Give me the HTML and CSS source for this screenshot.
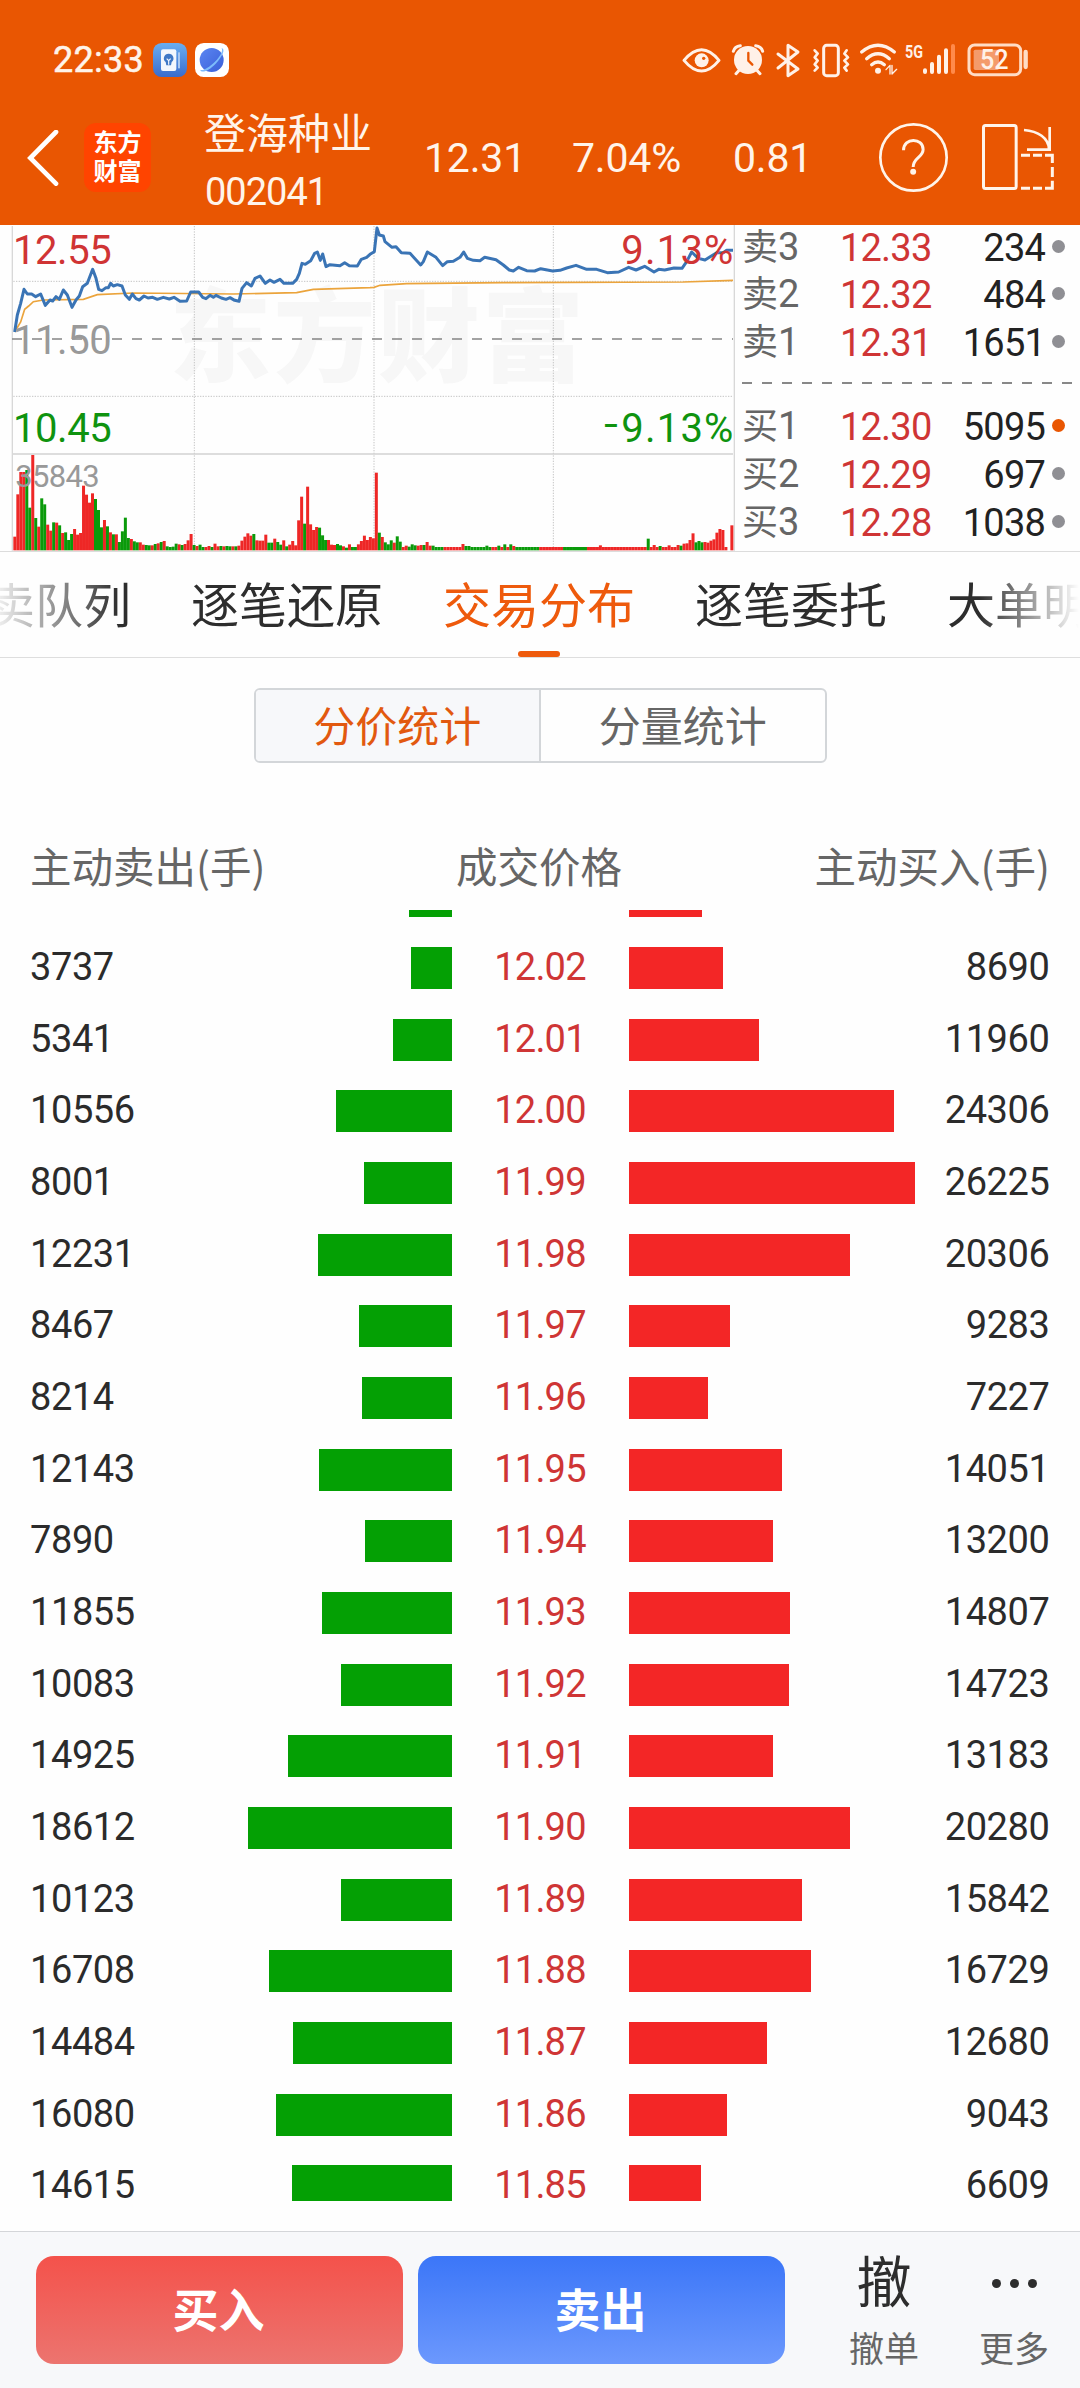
FILE: index.html
```html
<!DOCTYPE html>
<html lang="zh-CN">
<head>
<meta charset="utf-8">
<title>登海种业 002041</title>
<link rel="stylesheet" href="styles.css">
</head>
<body>
<header class="header">
  <div class="status">
    <span class="clock">22:33</span>
    <svg class="app-icon" viewBox="0 0 102 102">
      <defs><linearGradient id="ga" x1="0" y1="0" x2="0" y2="1"><stop offset="0" stop-color="#6aaef0"/><stop offset="1" stop-color="#3a6ccd"/></linearGradient>
      <linearGradient id="gb" x1="0" y1="0" x2="1" y2="1"><stop offset="0" stop-color="#5b86f2"/><stop offset="1" stop-color="#3a5fd8"/></linearGradient></defs>
      <rect width="102" height="102" rx="26" fill="url(#ga)"/>
      <rect x="24" y="19" width="46" height="65" rx="6" fill="#f3f7fd"/>
      <rect x="75" y="28" width="6" height="48" fill="#a9c8f0"/>
      <path d="M47 32a14 14 0 0 1 9 25l-2 10H40l-2-10a14 14 0 0 1 9-25z" fill="#3f78c6"/>
      <path d="M41 47l6 6 6-6M47 53v12" stroke="#f3f7fd" stroke-width="3.500" fill="none"/>
    </svg>
    <svg class="app-icon" viewBox="0 0 102 102">
      <rect width="102" height="102" rx="26" fill="#fff"/>
      <circle cx="50" cy="51" r="36" fill="url(#gb)"/>
      <path d="M80 15C92 18 83 40 62 62S20 92 15 80c8 5 26-6 44-23S84 24 80 15z" fill="#7dbcfb"/>
    </svg>
    <svg class="status-icons" viewBox="0 0 1080 150" fill="none" stroke="#fff1e8" stroke-width="9" stroke-linecap="round" stroke-linejoin="round">
      <path d="M12 73Q65 9 117 73Q65 137 12 73z"/>
      <circle cx="65" cy="73" r="21" fill="#fff1e8" stroke="none"/><circle cx="71" cy="67" r="5" fill="#e95602" stroke="none"/>
      <circle cx="204" cy="72" r="42" fill="#fff1e8" stroke="none"/>
      <path d="M160 46Q164 31 181 29M248 46Q244 31 227 29M176 104l-8 9M232 104l8 9"/>
      <path d="M205 51v23l12 12" stroke="#e95602" stroke-width="7"/>
      <path d="M294 54l60 45-30 20V28l30 20-60 48"/>
      <rect x="431" y="28" width="44" height="91" rx="9"/>
      <path d="M404 43l9 10-9 11 9 10-9 11 9 10-9 9M500 43l-7 10 11 11-11 10 11 11-11 10 7 9" stroke-width="8"/>
      <path d="M545 48Q594 7 643 48M560 68Q594 39 628 68M575 86Q594 70 613 86" stroke-width="10"/>
      <circle cx="594" cy="104" r="9" fill="#fff1e8" stroke="none"/>
      <path d="M618 101l12-13v26M636 88v26l14-14" stroke-width="4"/>
      <path d="M735 103v5M756 84v24M777 62v46M798 43v65" stroke-width="12"/>
      <path d="M819 30v78" stroke="#ff8a4a" stroke-width="12"/>
      <rect x="881" y="41" width="76" height="61" rx="5" fill="#f49b6b" stroke="none"/>
      <rect x="867" y="27" width="155" height="89" rx="17" stroke="#ffdcc5"/>
      <path d="M1037 48v45" stroke="#ffdcc5" stroke-width="13"/>
      <text class="net" x="675" y="65" textLength="54" lengthAdjust="spacingAndGlyphs">5G</text>
      <text class="batt" x="900" y="98" textLength="86" lengthAdjust="spacingAndGlyphs">52</text>
    </svg>
  </div>
  <nav class="nav">
    <svg class="back" viewBox="0 0 102 168"><path d="M90 6L13 84l77 77" fill="none" stroke="#fff" stroke-width="14" stroke-linecap="round"/></svg>
    <div class="logo"><span>东方</span><span>财富</span></div>
    <div class="stock"><span class="stock-name">登海种业</span><span class="stock-code">002041</span></div>
    <span class="quote">12.31</span>
    <span class="quote">7.04%</span>
    <span class="quote">0.81</span>
    <svg class="help" viewBox="0 0 208 208" fill="none" stroke="#fff4ea" stroke-width="8"><circle cx="104" cy="104" r="100"/><path d="M74 82C74 43 133 43 133 80C133 104 103 104 103 133" stroke-width="9"/><circle cx="103" cy="147" r="9" fill="#fff4ea" stroke="none"/></svg>
    <svg class="rotate" viewBox="0 0 216 198" fill="none" stroke="#fff4ea" stroke-width="9"><rect x="4.500" y="4.500" width="98" height="189" rx="6"/><path d="M126 18C168 21 200 42 201 76M135 77h68V9" stroke-width="8"/><path d="M117 94h27M153 94h27M189 94h22v23M211 129v30M211 170v23h-22M180 193h-27M144 193h-27"/></svg>
  </nav>
</header>

<section class="market">
  <svg class="chart" viewBox="0 15 2205 978">
    <g class="watermark"><text x="508" y="463" textLength="1244">东方财富</text></g>
    <path class="grid" d="M40 184H2199M40 529H2199M583 18V990M1122 18V990M1660 18V990"/>
    <path class="axis" d="M36 702H2199"/>
    <path class="frame" d="M37 18V992M2203 15V992"/>
    <path class="mid" d="M36 357H2199"/>
    <g id="volume"></g>
    <path class="avg" d="M44 336L62 306 74 268 86 258 100 245 130 240 250 238 292 224 400 219 700 222 890 218 940 208 1110 203 1122 202 1140 196 1220 191 1510 188 2050 186 2199 181"/>
    <path class="price" d="M44 336L52 285 62 250 72 208 82 222 95 222 107 230 122 222 136 256 150 240 158 243 168 230 178 238 190 210 202 225 216 262 228 240 238 228 248 200 262 190 278 148 288 175 296 208 306 212 318 203 325 203 332 190 340 198 352 194 366 198 376 225 388 238 397 222 408 236 418 240 432 228 444 234 458 232 472 238 490 232 508 237 522 232 540 244 560 243 572 216 596 216 608 232 618 236 630 226 640 232 648 226 664 234 678 238 690 233 704 241 717 244 726 205 740 188 754 198 765 175 780 168 796 190 810 180 822 187 840 178 852 190 878 190 890 178 898 160 906 130 916 133 932 122 944 100 952 96 961 121 968 102 978 140 990 134 1020 137 1034 128 1048 137 1072 138 1084 118 1100 112 1110 103 1123 95 1131 24 1138 45 1150 48 1155 65 1176 82 1188 80 1204 98 1230 100 1262 135 1270 125 1282 96 1308 112 1328 137 1342 125 1360 124 1380 112 1391 96 1402 115 1420 121 1440 122 1454 112 1488 119 1510 135 1528 150 1540 153 1556 142 1580 152 1604 153 1622 146 1658 153 1680 151 1700 144 1728 136 1760 148 1790 148 1822 158 1856 156 1886 142 1908 150 1934 139 1962 156 1976 148 1994 150 2022 144 2046 145 2060 125 2075 96 2095 115 2115 120 2150 98 2170 98 2180 91 2199 91"/>
    <g class="labels">
      <text class="up" x="39" y="133" textLength="296">12.55</text>
      <text class="flat" x="39" y="401" textLength="296">11.50</text>
      <text class="down" x="39" y="667" textLength="296">10.45</text>
      <text class="up" x="1864" y="133" textLength="336">9.13%</text>
      <text class="down" x="1808" y="660" textLength="50" lengthAdjust="spacingAndGlyphs">−</text>
      <text class="down" x="1864" y="667" textLength="336">9.13%</text>
      <text class="vol" x="46" y="800" textLength="253">35843</text>
    </g>
  </svg>
  <div class="book">
    <div class="level"><span>卖<b>3</b></span><span class="p">12.33</span><span class="q">234</span><i></i></div>
    <div class="level"><span>卖<b>2</b></span><span class="p">12.32</span><span class="q">484</span><i></i></div>
    <div class="level"><span>卖<b>1</b></span><span class="p">12.31</span><span class="q">1651</span><i></i></div>
    <div class="spread"></div>
    <div class="level"><span>买<b>1</b></span><span class="p">12.30</span><span class="q">5095</span><i class="hot"></i></div>
    <div class="level"><span>买<b>2</b></span><span class="p">12.29</span><span class="q">697</span><i></i></div>
    <div class="level"><span>买<b>3</b></span><span class="p">12.28</span><span class="q">1038</span><i></i></div>
  </div>
</section>

<nav class="tabs">
  <div class="tab-strip">
    <span>买卖队列</span><span>逐笔还原</span><span class="active">交易分布</span><span>逐笔委托</span><span>大单明细</span>
  </div>
</nav>

<div class="segment"><span class="on">分价统计</span><span>分量统计</span></div>

<div class="table-head"><span>主动卖出(手)</span><span>成交价格</span><span>主动买入(手)</span></div>
<main class="list" id="list"></main>

<footer class="actions">
  <button class="btn buy">买入</button>
  <button class="btn sell">卖出</button>
  <div class="tool cancel"><span class="glyph">撤</span><span class="cap">撤单</span></div>
  <div class="tool more"><span class="dots"><i></i><i></i><i></i></span><span class="cap">更多</span></div>
</footer>
<script src="app.js"></script>
</body>
</html>
```
FILE: styles.css
```css
* { box-sizing: border-box; }
body {
  margin: 0;
  width: 1080px;
  height: 2388px;
  overflow: hidden;
  display: flex;
  flex-direction: column;
  background: #fefefe;
  color: #2b2b2b;
  font-family: Roboto, "Noto Sans CJK SC", sans-serif;
  font-size: 38px;
}
svg { display: block; }
b, i { font-weight: inherit; font-style: normal; }

.header { height: 225px; flex: none; background: #e95602; color: #fff4ea; }
.status { height: 90px; padding-top: 36px; display: flex; align-items: flex-start; }
.clock { margin-left: 53px; width: 100px; font-size: 36px; line-height: 48px; letter-spacing: 0.3px; font-weight: 400; -webkit-text-stroke: 0.5px #fff4ea; }
.app-icon { width: 34px; height: 34px; margin: 7px 8px 0 0; }
.status-icons { width: 360px; height: 50px; margin-left: 443px; }
.net { font: 700 55px Roboto, sans-serif; fill: #fff1e8; stroke: none; }
.batt { font: 500 84px Roboto, sans-serif; fill: #fff1e8; stroke: none; }
.nav {
  height: 135px;
  display: grid;
  grid-template-columns: 84px 121px 219px 148px 161px 147px 102px 98px;
  align-items: center;
}
.back { width: 34px; height: 56px; margin-left: 26px; }
.logo {
  width: 67px; height: 69px; border-radius: 12px; background: #ff4400; color: #fff;
  display: flex; flex-direction: column; align-items: center; justify-content: center;
  font-size: 24px; font-weight: 700; line-height: 29px;
}
.stock { display: flex; flex-direction: column; padding-top: 9px; }
.stock-name { font-size: 42px; line-height: 60px; margin-left: -1px; }
.stock-code { font-size: 38px; line-height: 54px; letter-spacing: -1px; }
.quote { font-size: 41px; letter-spacing: -0.2px; }
.help { width: 69px; height: 69px; margin-left: -1px; }
.rotate { width: 72px; height: 66px; margin-top: -2px; }

.market { height: 327px; flex: none; display: flex; border-bottom: 1px solid #dcdcdc; }
.chart { width: 735px; height: 326px; flex: none; }
.watermark text { font: 900 306px "Noto Sans CJK SC", sans-serif; fill: #f7f7f7; }
.grid { stroke: #c4c4c4; stroke-width: 3; stroke-dasharray: 4 4; fill: none; }
.axis { stroke: #d2d2d2; stroke-width: 5; }
.frame { stroke: #d8d8d8; stroke-width: 4; fill: none; }
.mid { stroke: #858585; stroke-width: 5; stroke-dasharray: 30 30; }
.avg { stroke: #eba43c; stroke-width: 5; fill: none; }
.price { stroke: #3a74b5; stroke-width: 9; fill: none; stroke-linejoin: round; }
.bar-up { fill: #ee2726; }
.bar-down { fill: #0a9a0a; }
.labels text { font: 400 120px Roboto, sans-serif; }
.labels .up { fill: #d03434; }
.labels .down { fill: #0f930f; }
.labels .flat { fill: #999; }
.labels .vol { fill: #999; font-size: 93px; }

.book { flex: 1; padding: 0 14px 0 7px; color: #666; }
.level { height: 48px; display: grid; grid-template-columns: 98px 111px 93px 22px; align-items: center; line-height: 48px; font-size: 36px; }
.level:first-child { height: 45px; line-height: 42px; }
.level b { font-size: 38px; }
.level .p, .level .q { font-size: 38px; letter-spacing: -0.8px; }
.level .p { color: #cf3535; }
.level .q { color: #222; text-align: right; width: 104px; margin-left: -10px; }
.level i { width: 13px; height: 13px; border-radius: 50%; background: #8f8f94; margin: -2px 0 0 8px; }
.level .hot { background: #e95602; }
.spread { height: 36px; padding-top: 16px; }
.spread::before { content: ""; display: block; height: 2px; background: repeating-linear-gradient(90deg, #888 0 10px, transparent 10px 20px); width: 330px; margin-left: 0; }

.tabs { height: 106px; flex: none; border-bottom: 1px solid #dedede; overflow: hidden; }
.tab-strip {
  display: flex; gap: 60px; margin-left: -61px; width: 1300px; line-height: 109px; font-size: 48px; color: #2d2d2d;
  -webkit-mask-image: linear-gradient(90deg, transparent 50px, #000 180px, #000 1040px, transparent 1140px);
  mask-image: linear-gradient(90deg, transparent 50px, #000 180px, #000 1040px, transparent 1140px);
}
.tab-strip span { width: 192px; height: 105px; flex: none; white-space: nowrap; }
.tab-strip .active { color: #ee5a0c; display: flex; flex-direction: column; align-items: center; }
.tab-strip .active::after { content: ""; width: 42px; height: 6px; border-radius: 3px; background: #ee5a0c; margin-top: -10px; }

.segment {
  width: 573px; height: 75px; flex: none; margin: 30px auto 0; display: flex;
  border: 2px solid #d3d6d9; border-radius: 6px; overflow: hidden; font-size: 42px; line-height: 75px; color: #666; text-align: center;
}
.segment span { flex: 1; }
.segment .on { background: #f7f8fa; color: #e2590f; border-right: 2px solid #d3d6d9; }

.table-head {
  margin-top: 71px; height: 76px; flex: none; padding: 0 30px; display: grid; grid-template-columns: 1fr 1fr 1fr;
  font-size: 41.500px; line-height: 62px; color: #666; font-family: "Noto Sans CJK SC", sans-serif;
}
.table-head span:nth-child(2) { text-align: center; margin-left: -2px; }
.table-head span:nth-child(3) { text-align: right; }

.list { height: 1291px; flex: none; overflow: hidden; display: flex; flex-direction: column; justify-content: flex-end; padding: 0 30px; }
.row { height: 71.670px; flex: none; display: grid; grid-template-columns: 150px 271.500px 177px 295px 126px; align-items: center; letter-spacing: -0.4px; }
.row .price-cell { text-align: center; color: #cf3535; letter-spacing: -0.8px; }
.row .buy-vol { text-align: right; }
.row .cell { line-height: 44px; margin-top: -2px; }
.bar { height: 42px; }
.bar.out { background: #04a004; justify-self: end; }
.bar.in { background: #f32626; }
.row:last-child { margin-bottom: -21px; }

.actions {
  margin-top: 30px; flex: 1; background: #f7f8fa; border-top: 1px solid #d4d6d9;
  padding: 24px 0 0 36px; display: flex; align-items: flex-start;
}
.btn { width: 367px; height: 108px; border: 0; border-radius: 18px; margin-right: 15px; color: #fff; font: 700 46px "Noto Sans CJK SC", sans-serif; padding: 0 2px 6px 0; }
.buy { background: linear-gradient(#f4524b, #ec746f); }
.sell { background: linear-gradient(#3b76f8, #6c98fd); }
.tool { width: 130px; display: flex; flex-direction: column; align-items: center; color: #2d2d2d; }
.cancel { margin-left: 19px; }
.glyph { font-size: 55px; line-height: 54px; height: 67px; }
.cap { font-size: 35px; line-height: 56px; color: #666; }
.dots { height: 67px; display: flex; gap: 9px; padding-top: 23px; }
.dots i { width: 9px; height: 9px; border-radius: 50%; background: #2d2d2d; }
```
FILE: app.js
```js
// [sold, price, bought]; the first row is scrolled mostly out of view
const rows = [
  [3908, '', 6681], [3737, '12.02', 8690], [5341, '12.01', 11960], [10556, '12.00', 24306],
  [8001, '11.99', 26225], [12231, '11.98', 20306], [8467, '11.97', 9283], [8214, '11.96', 7227],
  [12143, '11.95', 14051], [7890, '11.94', 13200], [11855, '11.93', 14807], [10083, '11.92', 14723],
  [14925, '11.91', 13183], [18612, '11.90', 20280], [10123, '11.89', 15842], [16708, '11.88', 16729],
  [14484, '11.87', 12680], [16080, '11.86', 9043], [14615, '11.85', 6609]
];
const unit = 286.5 / 26225;
document.getElementById('list').innerHTML = rows.map(([s, p, b]) => `<div class="row">
  <span class="cell">${p ? s : ''}</span><div class="bar out" style="width:${(s * unit).toFixed(1)}px"></div>
  <span class="cell price-cell">${p}</span><div class="bar in" style="width:${(b * unit).toFixed(1)}px"></div>
  <span class="cell buy-vol">${p ? b : ''}</span></div>`).join('');

// per-minute volume: bar top, with r for a rising and g for a falling minute
const head = `950r 823r 756r 756r 750g 863g 705r 894g 920r 835g 853g 914r 932r 907g 908r 916g 939r 937g 960g 942g
927r 944r 939r 797r 824r 848r 820r 837g 870g 922g 900r 919g 937r 943g 943r 966g 934g 893g 954g 957r 964g 967g 967r
974r 975g 976g 976r 972g 970r 966g 963r 979g 981g 980g 971g 973r 975g 972r 961r 942r 975g 978r 974g 981g 981r 978r
981g 971r 979r 978g 979r 978g 979g 979r 979g 977r 962r 950r 940r 947r 942g 961r 962r 962r 944r 968g 968g 956r 966g
974g 961r 979g 974r 963r 976r 901r 830r 911g 800r 913r 930r 921r 923g 946g 960g 960r 974r 975r 972g 976g 979r 983g
973r 981g 981g 973r 963r 947r 960r 951r 955r 758r 938g 951r 967g 973g 961g 968r 949g 965g 981r 977r 980g 973g 976g
977r 975r 975g 966r 977r 977g`.split(/\s+/);
const peaks = {
  150: '972r', 151: '978g', 152: '978g', 158: '977g', 162: '977g', 164: '973g', 166: '973g', 167: '978r',
  196: '976r', 212: '956g', 214: '975r', 216: '978g', 219: '976r', 222: '975r', 223: '977g', 224: '971r',
  225: '970r', 226: '960r', 227: '940r', 228: '967g', 229: '963g', 230: '967g', 231: '966r', 232: '968r',
  233: '962r', 234: '958r', 235: '938r', 236: '927r', 237: '930r', 238: '981r', 240: '916r'
};
let bars = '';
for (let i = 0; i <= 240; i++) {
  if (i === 239) continue;
  const v = head[i] || peaks[i] || (i > 196 ? '981r' : '981' + ((i >> 3) % 2 ? 'g' : 'r'));
  const top = parseInt(v, 10);
  bars += `<rect class="${v.endsWith('r') ? 'bar-up' : 'bar-down'}" x="${(40 + i * 8.963).toFixed(1)}" y="${top}" width="9" height="${991 - top}"/>`;
}
document.getElementById('volume').innerHTML = bars;
```
